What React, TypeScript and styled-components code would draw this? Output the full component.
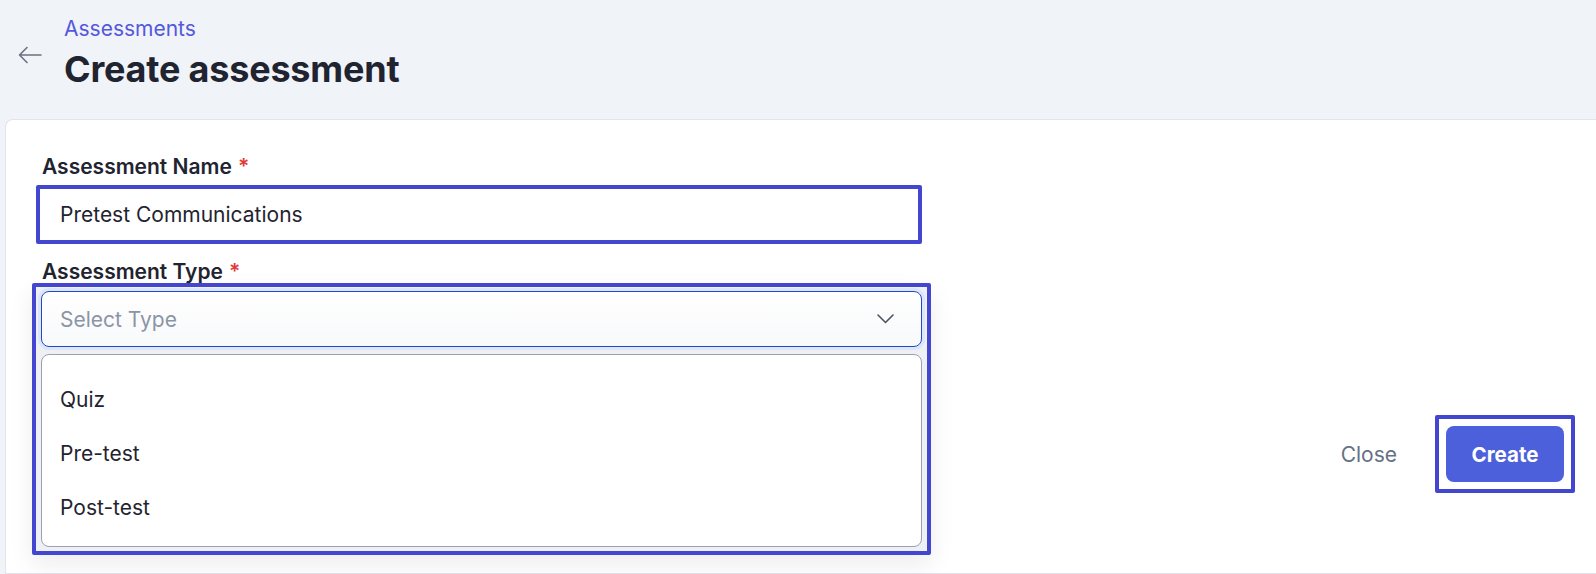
import React from "react";
import styled, { createGlobalStyle } from "styled-components";

const GlobalStyle = createGlobalStyle`
  html, body {
    margin: 0;
    padding: 0;
    background: #f0f3f8;
    font-family: Inter, "Noto Sans", "Liberation Sans", sans-serif;
    color: #1f2430;
  }
  * {
    box-sizing: border-box;
  }
`;

const Page = styled.div`
  width: 1596px;
  height: 574px;
  overflow: hidden;
  display: flex;
  flex-direction: column;
`;

const Header = styled.header`
  display: flex;
  align-items: flex-start;
  height: 119px;
  padding: 0 0 0 18px;
`;

const BackButton = styled.button`
  display: flex;
  align-items: center;
  justify-content: center;
  width: 24px;
  height: 18px;
  margin-top: 46px;
  margin-right: 22px;
  padding: 0;
  border: none;
  background: transparent;
  color: #6b7280;
  cursor: pointer;
`;

const TitleBlock = styled.div`
  display: flex;
  flex-direction: column;
  padding-top: 16px;
`;

const Breadcrumb = styled.a`
  font-size: 21px;
  line-height: 26px;
  color: #5458dc;
  text-decoration: none;
`;

const Title = styled.h1`
  margin: 5px 0 0 0;
  font-size: 36px;
  line-height: 44px;
  font-weight: 700;
  color: #1f2430;
  letter-spacing: -0.2px;
`;

const Card = styled.section`
  flex: 1;
  margin-left: 5px;
  background: #ffffff;
  border: 1px solid #e1e4ea;
  border-right: none;
  border-radius: 8px 0 0 0;
  display: flex;
  padding: 35px 21px 0 26px;
`;

const FormColumn = styled.div`
  width: 899px;
  display: flex;
  flex-direction: column;
`;

const Field = styled.div`
  display: flex;
  flex-direction: column;
`;

const Label = styled.label<{ $gap: number }>`
  padding-left: 10px;
  font-size: 21px;
  line-height: 24px;
  font-weight: 600;
  color: #1f2430;
  margin-bottom: ${(p) => p.$gap}px;
`;

const Required = styled.span`
  color: #e03b3b;
  margin-left: 6px;
`;

const NameInput = styled.input`
  margin-left: 4px;
  width: 886px;
  height: 59px;
  border: 4px solid #4347cf;
  border-radius: 2px;
  padding: 0 0 0 20px;
  font-family: inherit;
  font-size: 21px;
  color: #1f2430;
  background: #ffffff;
  outline: none;
  margin-bottom: 16px;
`;

const Highlight = styled.div`
  border: 4px solid #4347cf;
  border-radius: 2px;
  padding: 4px 5px;
  display: flex;
  flex-direction: column;
  gap: 7px;
  background: #eef0f5;
  box-shadow: 0 10px 24px rgba(20, 30, 60, 0.08);
`;

const SelectControl = styled.div`
  height: 56px;
  border: 1px solid #2447c9;
  border-radius: 8px;
  box-shadow: 0 0 0 3px #dbe6fb;
  background: linear-gradient(#ffffff, #f8f9fb);
  display: flex;
  align-items: center;
  justify-content: space-between;
  padding: 0 27px 0 18px;
`;

const Placeholder = styled.span`
  font-size: 21px;
  color: #8b95a6;
`;

const OptionList = styled.ul`
  margin: 0;
  list-style: none;
  height: 193px;
  border: 1px solid #9aa1ad;
  border-radius: 8px;
  background: #ffffff;
  padding: 17px 0 0 0;
`;

const Option = styled.li`
  height: 54px;
  display: flex;
  align-items: center;
  padding-left: 18px;
  font-size: 21px;
  color: #1f2430;
`;

const Actions = styled.div`
  flex: 1;
  display: flex;
  justify-content: flex-end;
  align-items: center;
  align-self: flex-start;
  margin-top: 260px;
  gap: 38px;
`;

const CloseButton = styled.button`
  border: none;
  background: transparent;
  font-family: inherit;
  font-size: 21px;
  color: #667085;
  padding: 0;
  cursor: pointer;
`;

const ButtonFrame = styled.div`
  border: 4px solid #4347cf;
  border-radius: 2px;
  padding: 7px;
`;

const PrimaryButton = styled.button`
  width: 118px;
  height: 56px;
  border: none;
  border-radius: 8px;
  background: #4c60dc;
  color: #ffffff;
  font-family: inherit;
  font-size: 20.5px;
  font-weight: 700;
  cursor: pointer;
`;

const Chevron = () => (
  <svg width="17" height="10" viewBox="0 0 17 10" fill="none">
    <path d="M1 1l7.5 7.5L16 1" stroke="#4b5563" strokeWidth="1.6" strokeLinecap="round" strokeLinejoin="round" />
  </svg>
);

const ArrowLeft = () => (
  <svg width="24" height="18" viewBox="0 0 24 18" fill="none">
    <path d="M23 9H1.5M9 1.5L1.5 9L9 16.5" stroke="currentColor" strokeWidth="1.6" strokeLinecap="round" strokeLinejoin="round" />
  </svg>
);

const options = ["Quiz", "Pre-test", "Post-test"];

export default function App() {
  return (
    <Page>
      <GlobalStyle />
      <Header>
        <BackButton aria-label="Back">
          <ArrowLeft />
        </BackButton>
        <TitleBlock>
          <Breadcrumb href="#">Assessments</Breadcrumb>
          <Title>Create assessment</Title>
        </TitleBlock>
      </Header>
      <Card>
        <FormColumn>
          <Field>
            <Label $gap={6}>
              Assessment Name<Required>*</Required>
            </Label>
            <NameInput defaultValue="Pretest Communications" />
          </Field>
          <Field>
            <Label $gap={-1}>
              Assessment Type<Required>*</Required>
            </Label>
            <Highlight>
              <SelectControl>
                <Placeholder>Select Type</Placeholder>
                <Chevron />
              </SelectControl>
              <OptionList>
                {options.map((o) => (
                  <Option key={o}>{o}</Option>
                ))}
              </OptionList>
            </Highlight>
          </Field>
        </FormColumn>
        <Actions>
          <CloseButton>Close</CloseButton>
          <ButtonFrame>
            <PrimaryButton>Create</PrimaryButton>
          </ButtonFrame>
        </Actions>
      </Card>
    </Page>
  );
}
